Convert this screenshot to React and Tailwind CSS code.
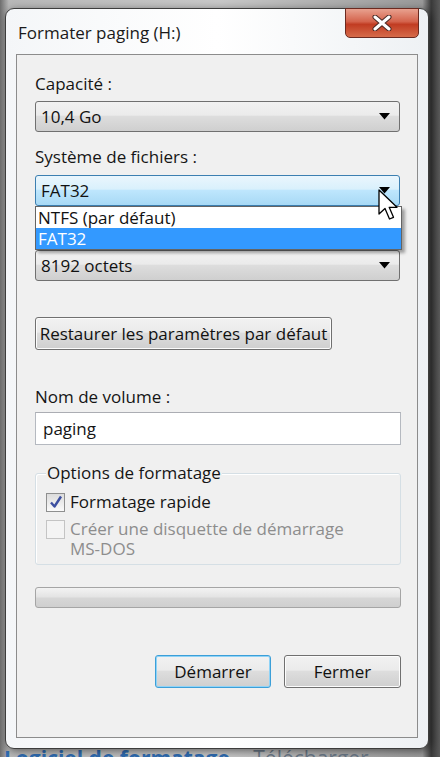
import React from 'react';

const font = { fontFamily: '"Open Sans", "Noto Sans", sans-serif' };

const Arrow = () => (
  <svg width="11" height="7" viewBox="0 0 11 7">
    <path d="M0 0 L11 0 L5.5 6.5 Z" fill="#000" />
  </svg>
);

const Combo = ({ value, focused }) => (
  <div
    className={
      'flex h-[31px] w-[365px] items-center justify-between rounded-[3px] border pl-[5px] pr-[9px] ' +
      (focused
        ? 'border-[#3c7fb1] bg-[linear-gradient(#eaf6fd_0%,#d9f0fc_45%,#bee6fd_50%,#a7d9f5_100%)]'
        : 'border-[#707070] bg-[linear-gradient(#f2f2f2_0%,#ebebeb_45%,#dddddd_50%,#cfcfcf_100%)]')
    }
  >
    <span className="text-[17px] text-[#111]">{value}</span>
    <Arrow />
  </div>
);

const Btn = ({ children, primary, className }) => (
  <div
    className={
      'flex h-[33px] items-center justify-center rounded-[3px] border bg-[linear-gradient(#f2f2f2_0%,#ebebeb_45%,#dddddd_50%,#cfcfcf_100%)] text-[17px] text-[#111] ' +
      (primary ? 'border-[#3c9fd8] shadow-[inset_0_0_0_1px_#8fd3f7]' : 'border-[#707070] shadow-[inset_0_0_0_1px_#fcfcfc]') +
      ' ' +
      className
    }
  >
    {children}
  </div>
);

const Check = ({ checked, disabled }) => (
  <div
    className={
      'flex h-[19px] w-[19px] shrink-0 items-center justify-center border ' +
      (disabled ? 'border-[#c4c4c4] bg-[#f4f4f4]' : 'border-[#8e8f8f] bg-[linear-gradient(#dcdcdc,#fafafa)]')
    }
  >
    {checked && (
      <svg width="14" height="14" viewBox="0 0 14 14">
        <path d="M2 7.5 L5.5 11.5 L12 1.5" fill="none" stroke="#3c4fa0" strokeWidth="2.4" strokeLinejoin="round" />
      </svg>
    )}
  </div>
);

export default function App() {
  return (
    <div
      className="relative h-[757px] w-[440px] overflow-hidden bg-[linear-gradient(90deg,#6e6e6e_0%,#b8b8b8_2%,#c8c8c8_50%,#9a9a9a_96%,#3a3a3a_98%,#5a5a5a_100%)]"
      style={font}
    >
      <div className="relative ml-[5px] mt-[8px] flex h-[741px] w-[424px] flex-col rounded-[9px] border border-[#3d3d3d] bg-[linear-gradient(90deg,#f4f6f8,#ffffff_50%,#eef1f4)] shadow-[2px_2px_8px_rgba(0,0,0,0.5)]">
        {/* Title bar */}
        <div className="flex h-[45px] items-center pl-[12px] pt-[3px]">
          <span className="text-[17px] text-[#1a1a1a]">Formater paging (H:)</span>
        </div>
        <div className="absolute right-[9px] top-[-1px] flex h-[30px] w-[74px] items-center justify-center rounded-b-[5px] border border-[#6b2a20] bg-[linear-gradient(#e8a18f_0%,#d4634c_45%,#c13c22_55%,#d66b4a_100%)]">
          <svg width="22" height="16" viewBox="0 0 22 16">
            <path d="M4 2 L18 14 M18 2 L4 14" stroke="#4a2a25" strokeWidth="5" strokeLinecap="round" />
            <path d="M4 2 L18 14 M18 2 L4 14" stroke="#fff" strokeWidth="3" strokeLinecap="round" />
          </svg>
        </div>

        {/* Client area */}
        <div className="mx-[10px] flex h-[684px] flex-col border border-[#8c8c8c] bg-[#f0f0f0] pl-[18px] text-[17px] text-[#151515]">
          <div className="mt-[17px] leading-[24px]">Capacité :</div>
          <div className="mt-[5px]">
            <Combo value="10,4 Go" />
          </div>
          <div className="mt-[13px] leading-[24px]">Système de fichiers :</div>
          <div className="relative mt-[6px]">
            <Combo value="FAT32" focused />
            <div className="absolute left-0 top-[31px] z-10 flex w-[367px] flex-col border border-[#646464] bg-white shadow-[3px_3px_3px_rgba(0,0,0,0.35)]">
              <div className="h-[21px] pl-[2px] leading-[21px] text-[#111]">NTFS (par défaut)</div>
              <div className="h-[21px] bg-[#3399ff] pl-[2px] leading-[21px] text-white">FAT32</div>
            </div>
            <svg className="absolute left-[342px] top-[14px] z-20" width="24" height="34" viewBox="0 0 24 34">
              <path d="M2 1 L2 25 L8 19.5 L12.5 30 L16.5 28.3 L12.2 18.3 L20 18.3 Z" fill="#fff" stroke="#000" strokeWidth="1.3" strokeLinejoin="round" />
            </svg>
          </div>
          <div className="mt-[44px]">
            <Combo value="8192 octets" />
          </div>
          <div className="mt-[36px]">
            <Btn className="w-[297px]">Restaurer les paramètres par défaut</Btn>
          </div>
          <div className="mt-[35px] leading-[24px]">Nom de volume :</div>
          <div className="mt-[3px] flex h-[33px] w-[366px] items-center border border-[#b5b9c0] border-t-[#abadb3] bg-white pl-[7px]">
            paging
          </div>

          {/* Group box */}
          <div className="relative mt-[28px] h-[92px] w-[366px] rounded-[3px] border border-[#d5dfe5] shadow-[inset_1px_1px_0_#fff]">
            <div className="absolute left-[10px] top-[-13px] bg-[#f0f0f0] px-[1px] leading-[24px]">Options de formatage</div>
            <div className="ml-[10px] mt-[17px] flex items-center gap-[5px] leading-[22px]">
              <Check checked />
              <span>Formatage rapide</span>
            </div>
            <div className="ml-[10px] mt-[6px] flex items-start gap-[5px] text-[#8d8d8d]">
              <div className="mt-[1px]">
                <Check disabled />
              </div>
              <div className="flex flex-col">
                <span className="block leading-[20px]">Créer une disquette de démarrage</span>
                <span className="block leading-[20px]">MS-DOS</span>
              </div>
            </div>
          </div>

          {/* Progress bar */}
          <div className="mt-[22px] h-[21px] w-[366px] rounded-[3px] border border-[#a5a5a5] bg-[linear-gradient(#f3f3f3_0%,#e4e4e4_45%,#d6d6d6_55%,#cfcfcf_100%)]" />

          <div className="mt-[47px] flex w-[366px] justify-end gap-[13px]">
            <Btn primary className="w-[116px]">Démarrer</Btn>
            <Btn className="w-[117px]">Fermer</Btn>
          </div>
        </div>
      </div>
      <div className="-mt-[2px] ml-[4px] text-[21px] font-bold leading-[22px] text-[#2f6db3]">
        Logiciel de formatage <span className="ml-[18px] font-normal text-[#6c7a89]">Télécharger</span>
      </div>
    </div>
  );
}
